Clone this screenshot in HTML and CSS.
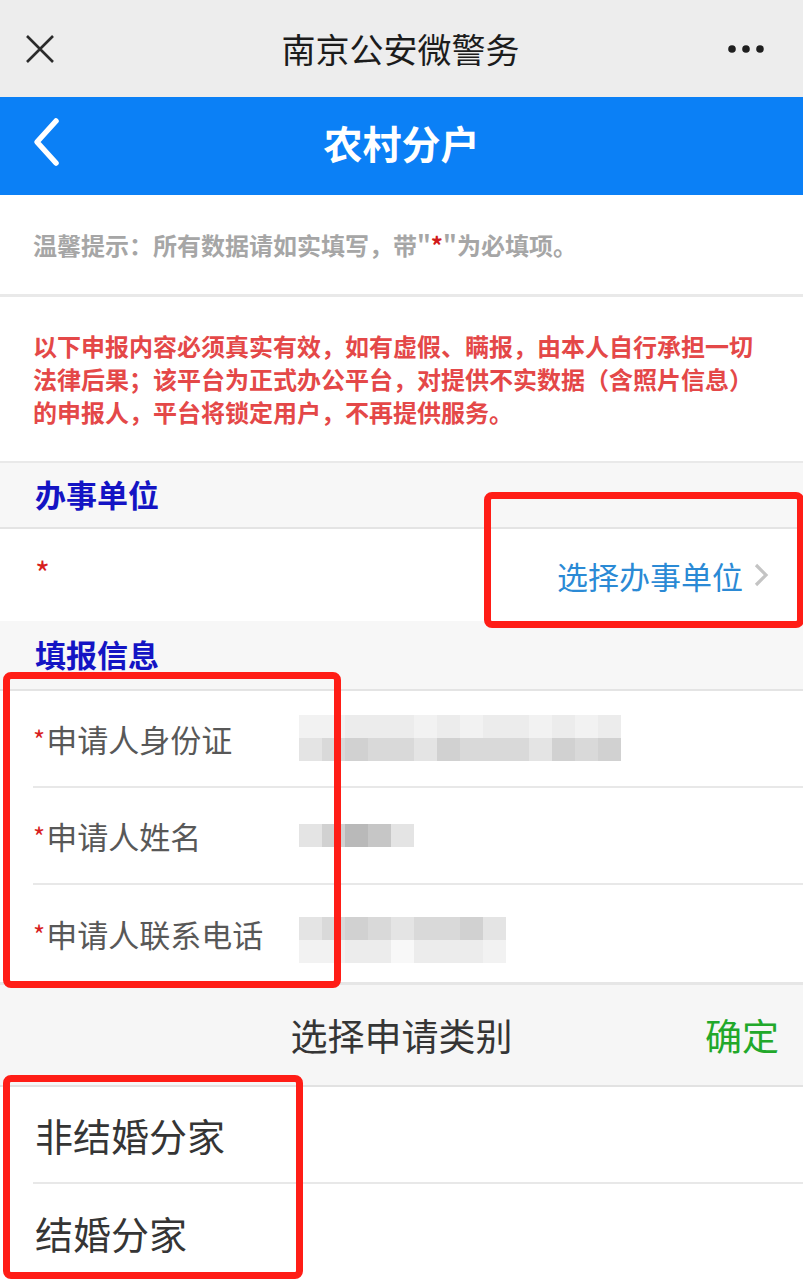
FILE: index.html
```html
<!DOCTYPE html>
<html lang="zh-Hans">
<head>
  <meta charset="UTF-8" />
  <meta name="viewport" content="width=device-width, initial-scale=1.0"/>
  <title>农村分户</title>
  <link rel="stylesheet" href="styles.css">
</head>
<body>
  <div class="page">
    <div class="topbar">
      <svg class="close" width="30" height="30" viewBox="0 0 30 30">
        <path d="M2 2 L28 28 M28 2 L2 28" stroke="#2b2b2b" stroke-width="2.6" fill="none"/>
      </svg>
      <span class="app-title">南京公安微警务</span>
      <svg class="more" width="40" height="10" viewBox="0 0 40 10">
        <circle cx="6" cy="5" r="3.8" fill="#1f1f1f"/>
        <circle cx="20" cy="5" r="3.8" fill="#1f1f1f"/>
        <circle cx="34" cy="5" r="3.8" fill="#1f1f1f"/>
      </svg>
    </div>

    <header class="navbar">
      <svg class="back" width="30" height="50" viewBox="0 0 30 50">
        <path d="M24 4 L5 25 L24 46" stroke="#fff" stroke-width="5.5" stroke-linecap="round" stroke-linejoin="round" fill="none"/>
      </svg>
      <h1>农村分户</h1>
    </header>

    <div class="tip">温馨提示：所有数据请如实填写，带"<em>*</em>"为必填项。</div>

    <div class="warning">以下申报内容必须真实有效，如有虚假、瞒报，由本人自行承担一切法律后果；该平台为正式办公平台，对提供不实数据（含照片信息）的申报人，平台将锁定用户，不再提供服务。</div>

    <div class="section-title">办事单位</div>
    <div class="unit-row">
      <span class="req">*</span>
      <span class="select">选择办事单位
        <svg class="arrow" width="16" height="26" viewBox="0 0 16 26">
          <path d="M3 3 L13 13 L3 23" stroke="#c4c4c4" stroke-width="3.2" fill="none"/>
        </svg>
      </span>
    </div>

    <div class="section-title second">填报信息</div>
    <div class="fields">
      <div class="field">
        <label><span class="req">*</span>申请人身份证</label>
        <div class="mosaic cols-14">
          <i class="m1"></i><i class="m1"></i><i class="m2"></i><i class="m2"></i><i class="m2"></i><i class="m1"></i><i class="m2"></i><i class="m1"></i><i class="m2"></i><i class="m2"></i><i class="m1"></i><i class="m2"></i><i class="m1"></i><i class="m2"></i>
          <i class="m3"></i><i class="m4"></i><i class="m5"></i><i class="m4"></i><i class="m4"></i><i class="m3"></i><i class="m5"></i><i class="m4"></i><i class="m4"></i><i class="m4"></i><i class="m3"></i><i class="m5"></i><i class="m4"></i><i class="m5"></i>
        </div>
      </div>
      <div class="field">
        <label><span class="req">*</span>申请人姓名</label>
        <div class="mosaic cols-5">
          <i class="m3"></i><i class="m5"></i><i class="m7"></i><i class="m6"></i><i class="m3"></i>
        </div>
      </div>
      <div class="field">
        <label><span class="req">*</span>申请人联系电话</label>
        <div class="mosaic cols-9">
          <i class="m3"></i><i class="m4"></i><i class="m5"></i><i class="m4"></i><i class="m3"></i><i class="m4"></i><i class="m4"></i><i class="m5"></i><i class="m3"></i>
          <i class="m1"></i><i class="m1"></i><i class="m2"></i><i class="m2"></i><i class="m0"></i><i class="m2"></i><i class="m2"></i><i class="m2"></i><i class="m1"></i>
        </div>
      </div>
    </div>

    <div class="picker">
      <div class="picker-head">
        <span class="picker-title">选择申请类别</span>
        <span class="confirm">确定</span>
      </div>
      <div class="option">非结婚分家</div>
      <div class="option">结婚分家</div>
    </div>

    <div class="mark mark-unit"></div>
    <div class="mark mark-fields"></div>
    <div class="mark mark-options"></div>
  </div>
</body>
</html>
```

FILE: styles.css
```css
body {
  margin: 0;
  font-family: "Noto Sans CJK SC", "Noto Sans", sans-serif;
  background-color: #fff;
}
.page {
  position: relative;
  width: 803px;
  height: 1280px;
  overflow: hidden;
}

/* wechat top bar */
.topbar {
  height: 97px;
  background-color: #ededed;
  display: flex;
  align-items: center;
  justify-content: space-between;
  padding: 0 37px 0 25px;
}
.app-title {
  font-size: 34px;
  color: #1c1c1c;
  margin-left: 20px;
}

/* blue nav */
.navbar {
  position: relative;
  height: 98px;
  background-color: #0b80f6;
  display: flex;
  align-items: center;
  justify-content: center;
}
.navbar .back {
  position: absolute;
  left: 32px;
  top: 20px;
}
.navbar h1 {
  margin: 0 0 8px;
  font-size: 39px;
  font-weight: bold;
  color: #fff;
}

.tip {
  height: 99px;
  display: flex;
  align-items: center;
  padding: 0 33px;
  font-size: 24px;
  font-weight: bold;
  color: #a6a6a6;
  border-bottom: 3px solid #e9e9e9;
}
.tip em {
  font-style: normal;
  color: #d11a1a;
}

.warning {
  padding: 32px 33px 33px;
  font-size: 24px;
  line-height: 33px;
  font-weight: bold;
  color: #e44848;
}

.section-title {
  height: 68px;
  display: flex;
  align-items: center;
  padding: 0 0 4px 35px;
  background-color: #f7f7f7;
  border-top: 2px solid #e9e9e9;
  border-bottom: 2px solid #e4e4e4;
  font-size: 31px;
  font-weight: bold;
  color: #1414c4;
  box-sizing: border-box;
}
.section-title.second {
  height: 70px;
  border-top: none;
  padding-bottom: 4px;
}

.req {
  color: #d81e1e;
  font-size: 26px;
}

.unit-row {
  height: 92px;
  display: flex;
  align-items: center;
  justify-content: space-between;
  padding: 0 34px 0 35px;
  background-color: #fff;
}
.unit-row .req {
  font-size: 32px;
  margin-bottom: 6px;
}
.select {
  display: flex;
  align-items: center;
  gap: 10px;
  font-size: 31px;
  color: #2b8ad5;
}

.field {
  height: 97px;
  display: flex;
  align-items: center;
  margin-left: 33px;
  border-bottom: 2px solid #e8e8e8;
  box-sizing: border-box;
}
.field:last-child {
  border-bottom: none;
}
.field label {
  width: 266px;
  font-size: 31px;
  color: #585858;
  display: flex;
  align-items: center;
}
.field label .req {
  font-size: 26px;
  margin-right: 1px;
}

.mosaic {
  display: grid;
  grid-auto-rows: 23px;
  grid-template-columns: repeat(14, 23px);
}
.mosaic.cols-5 { grid-template-columns: repeat(5, 23px); }
.mosaic.cols-9 { grid-template-columns: repeat(9, 23px); }
.mosaic.cols-14 { margin-top: -2px; }
.mosaic.cols-9 { margin-top: 13px; }
.mosaic i { display: block; }
.m0 { background-color: #f8f8f8; }
.m1 { background-color: #f2f2f2; }
.m2 { background-color: #ececec; }
.m3 { background-color: #e4e4e4; }
.m4 { background-color: #d9d9d9; }
.m5 { background-color: #d1d1d1; }
.m6 { background-color: #c6c6c6; }
.m7 { background-color: #b9b9b9; }

/* bottom picker */
.picker {
  border-top: 3px solid #e6e6e6;
}
.picker-head {
  position: relative;
  height: 100px;
  display: flex;
  align-items: center;
  justify-content: center;
  background-color: #f6f6f6;
  border-bottom: 2px solid #e2e2e2;
}
.picker-title {
  font-size: 37px;
  color: #353535;
}
.confirm {
  position: absolute;
  right: 24px;
  font-size: 37px;
  color: #22a82a;
}
.option {
  height: 97px;
  display: flex;
  align-items: center;
  margin-left: 33px;
  padding-left: 2px;
  font-size: 38px;
  color: #353535;
  border-bottom: 2px solid #e8e8e8;
  box-sizing: border-box;
}
.option:last-child {
  border-bottom: none;
}

/* red annotation frames */
.mark {
  position: absolute;
  border: 7px solid #ff1d16;
  border-radius: 8px;
  box-sizing: border-box;
}
.mark-unit {
  left: 484px;
  top: 492px;
  width: 320px;
  height: 136px;
}
.mark-fields {
  left: 3px;
  top: 672px;
  width: 338px;
  height: 316px;
}
.mark-options {
  left: 3px;
  top: 1075px;
  width: 300px;
  height: 204px;
}
```
